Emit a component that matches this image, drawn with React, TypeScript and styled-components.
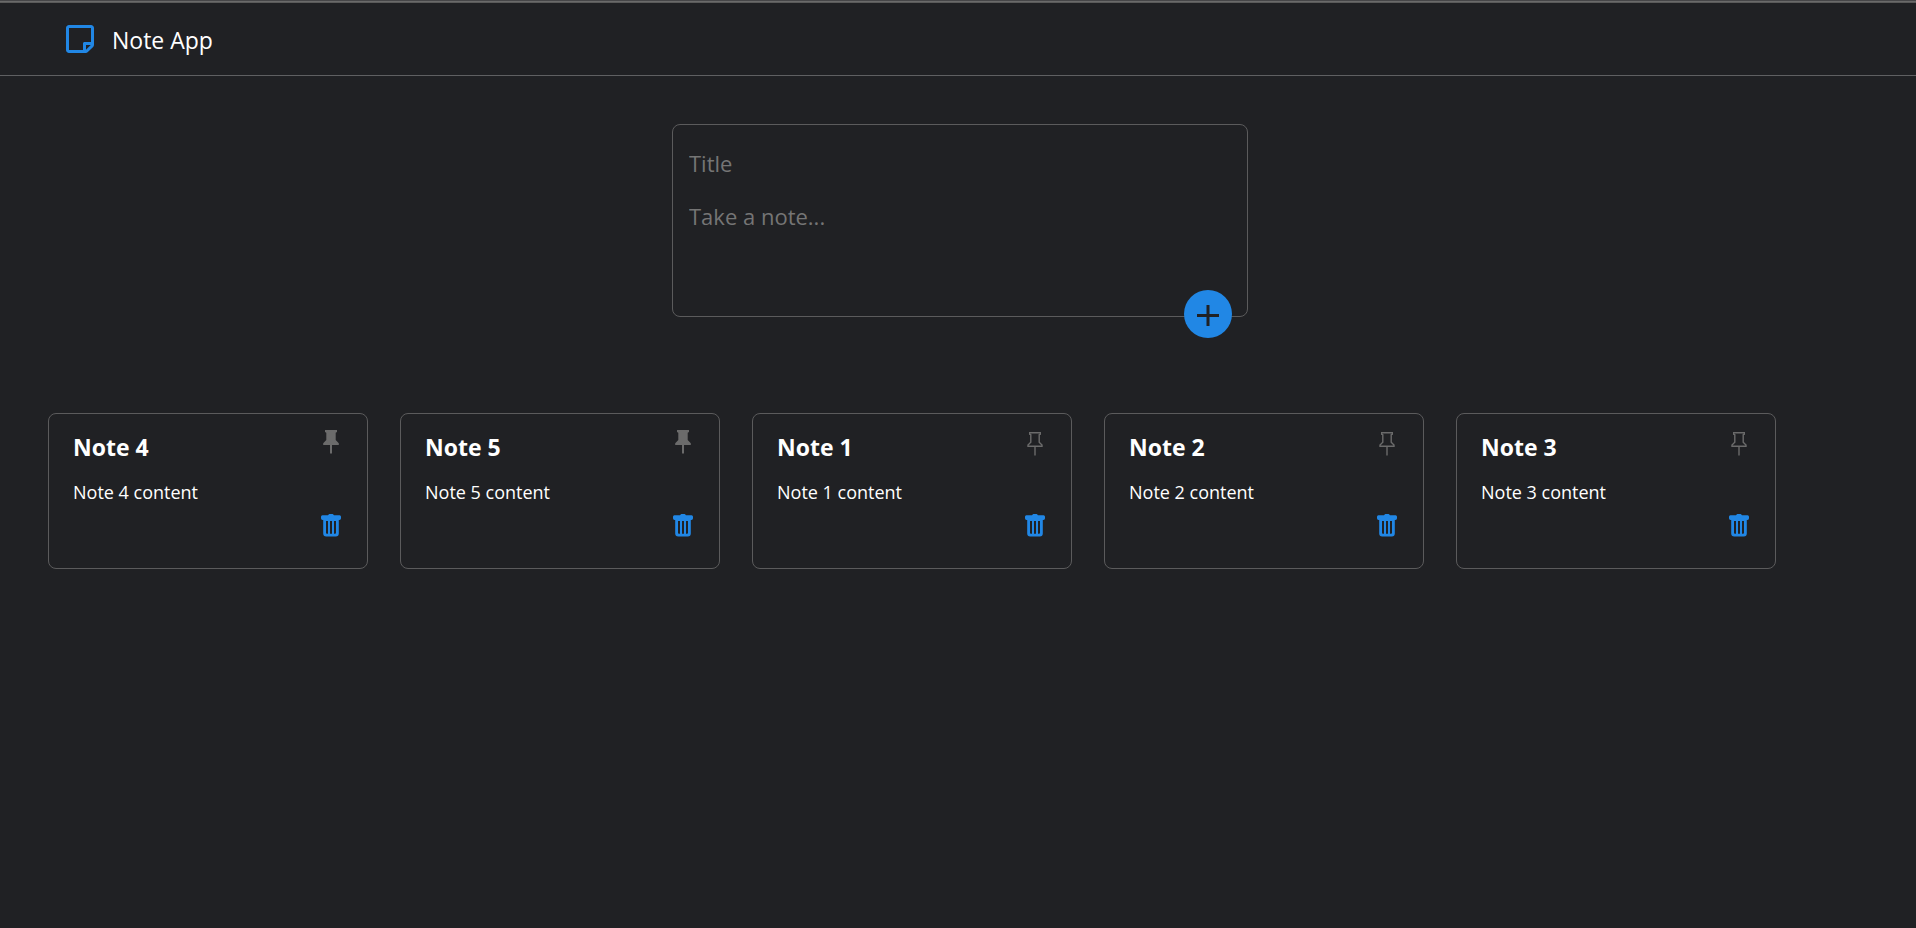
import React, { useState } from "react";
import styled, { createGlobalStyle } from "styled-components";
import { FaRegStickyNote } from "react-icons/fa";

const GlobalStyle = createGlobalStyle`
  *, *::before, *::after { box-sizing: border-box; }
  body {
    margin: 0;
    background: #202124;
    color: #fff;
    font-family: "Segoe UI", "Open Sans", "Noto Sans", sans-serif;
  }
`;

const Page = styled.div`
  min-height: 100vh;
`;

const TopStrip = styled.div`
  height: 3px;
  border-top: 1px solid #464648;
  border-bottom: 1px solid #5a5a5a;
  background: #6a6a6a;
`;

const Header = styled.header`
  display: flex;
  align-items: center;
  gap: 16px;
  height: 73px;
  padding: 0 64px;
  border-bottom: 1px solid #5f6062;
`;

const Logo = styled(FaRegStickyNote)`
  width: 32px;
  height: 32px;
  color: #2187e5;
`;

const Brand = styled.h1`
  margin: 0;
  padding-top: 2px;
  font-size: 23px;
  line-height: 32px;
  font-weight: 400;
`;

const Main = styled.main`
  padding: 48px 44px 48px 48px;
`;

const NoteForm = styled.form`
  position: relative;
  display: flex;
  flex-direction: column;
  width: 576px;
  max-width: 100%;
  margin: 0 auto 96px;
  padding: 16px;
  border: 1px solid #5b5b5c;
  border-radius: 8px;
`;

const fieldStyle = `
  width: 100%;
  padding: 0;
  border: 0;
  outline: 0;
  background: transparent;
  color: #fff;
  font-family: inherit;
  font-size: 22px;
  line-height: 32px;
  &::placeholder { color: #757575; opacity: 1; }
`;

const TitleInput = styled.input`
  ${fieldStyle}
  height: 44px;
`;

const NoteInput = styled.textarea`
  ${fieldStyle}
  display: block;
  height: 107px;
  margin-top: 8px;
  padding-top: 7px;
  resize: none;
`;

const AddButton = styled.button`
  position: absolute;
  right: 15px;
  bottom: -22px;
  display: grid;
  place-items: center;
  width: 48px;
  height: 48px;
  padding: 0;
  border: 0;
  border-radius: 50%;
  background: #2187e5;
  color: #202124;
  cursor: pointer;
`;

const NoteList = styled.ul`
  display: flex;
  flex-wrap: wrap;
  gap: 32px;
  margin: 0;
  padding: 0;
  list-style: none;
`;

const NoteCard = styled.li`
  display: flex;
  justify-content: space-between;
  width: 320px;
  min-height: 156px;
  padding: 16px 24px;
  border: 1px solid #5b5b5c;
  border-radius: 8px;
`;

const NoteTitle = styled.h2`
  margin: 0 0 14px;
  font-size: 23px;
  line-height: 34px;
  font-weight: 700;
`;

const NoteText = styled.p`
  margin: 0;
  font-size: 18px;
  line-height: 28px;
`;

const Actions = styled.div`
  display: flex;
  flex-direction: column;
  gap: 54px;
`;

const IconButton = styled.button<{ $tone: string }>`
  display: grid;
  place-items: center;
  width: 24px;
  height: 28px;
  padding: 0;
  border: 0;
  background: none;
  color: ${(p) => p.$tone};
  cursor: pointer;
`;

const PlusIcon = () => (
  <svg width="24" height="26" viewBox="0 0 24 26" aria-hidden="true">
    <path d="M1 14.500H23M12 4V25" stroke="currentColor" strokeWidth="3" />
  </svg>
);

const PinIcon = ({ filled }: { filled: boolean }) => (
  <svg width="24" height="28" viewBox="0 0 24 28" aria-hidden="true">
    {filled ? (
      <path
        fill="currentColor"
        d="M6 0H18V2L16.700 2.700V10L19.800 13.200V15H13V23.600H11V15H4.200V13.200L7.300 10V2.700L6 2Z"
      />
    ) : (
      <path
        fill="none"
        stroke="currentColor"
        strokeWidth="1.4"
        d="M6.700 2.700H17.300V4.300L16.200 4.700V12.300L19 15V16.300H5V15L7.800 12.300V4.700L6.700 4.300ZM12 16.300V25.600"
      />
    )}
  </svg>
);

const TrashIcon = () => (
  <svg width="24" height="28" viewBox="0 0 24 28" aria-hidden="true">
    <path
      fill="currentColor"
      fillRule="evenodd"
      d="M3.600 3.200H9C9.600 2.300 10.200 2 11 2H13C13.800 2 14.400 2.300 15 3.200H20.400A1.500 1.500 0 0 1 22 4.700V6.300A1.700 1.700 0 0 1 20.400 8H19.800V21.600A3 3 0 0 1 16.800 24.600H7.200A3 3 0 0 1 4.200 21.600V8H3.600A1.700 1.700 0 0 1 2 6.300V4.700A1.500 1.500 0 0 1 3.600 3.200ZM7 9V20.800Q7 21.700 7.900 21.700H9V9ZM11 9V21.700H13V9ZM15 9V21.700H16.100Q17 21.700 17 20.800V9Z"
    />
  </svg>
);

type Note = { id: number; pinned: boolean };

const initialNotes: Note[] = [
  { id: 4, pinned: true },
  { id: 5, pinned: true },
  { id: 1, pinned: false },
  { id: 2, pinned: false },
  { id: 3, pinned: false },
];

export default function App() {
  const [notes, setNotes] = useState(initialNotes);
  const togglePin = (id: number) =>
    setNotes((all) => all.map((n) => (n.id === id ? { ...n, pinned: !n.pinned } : n)));
  const remove = (id: number) => setNotes((all) => all.filter((n) => n.id !== id));

  return (
    <Page>
      <GlobalStyle />
      <TopStrip />
      <Header>
        <Logo aria-hidden="true" />
        <Brand>Note App</Brand>
      </Header>
      <Main>
        <NoteForm onSubmit={(e) => e.preventDefault()}>
          <TitleInput aria-label="Title" placeholder="Title" />
          <NoteInput aria-label="Note" placeholder="Take a note..." />
          <AddButton type="submit" aria-label="Add note">
            <PlusIcon />
          </AddButton>
        </NoteForm>
        <NoteList>
          {notes.map((note) => (
            <NoteCard key={note.id}>
              <div>
                <NoteTitle>Note {note.id}</NoteTitle>
                <NoteText>Note {note.id} content</NoteText>
              </div>
              <Actions>
                <IconButton
                  $tone="#6b6b6b"
                  aria-label="Pin note"
                  aria-pressed={note.pinned}
                  onClick={() => togglePin(note.id)}
                >
                  <PinIcon filled={note.pinned} />
                </IconButton>
                <IconButton $tone="#2187e5" aria-label="Delete note" onClick={() => remove(note.id)}>
                  <TrashIcon />
                </IconButton>
              </Actions>
            </NoteCard>
          ))}
        </NoteList>
      </Main>
    </Page>
  );
}
